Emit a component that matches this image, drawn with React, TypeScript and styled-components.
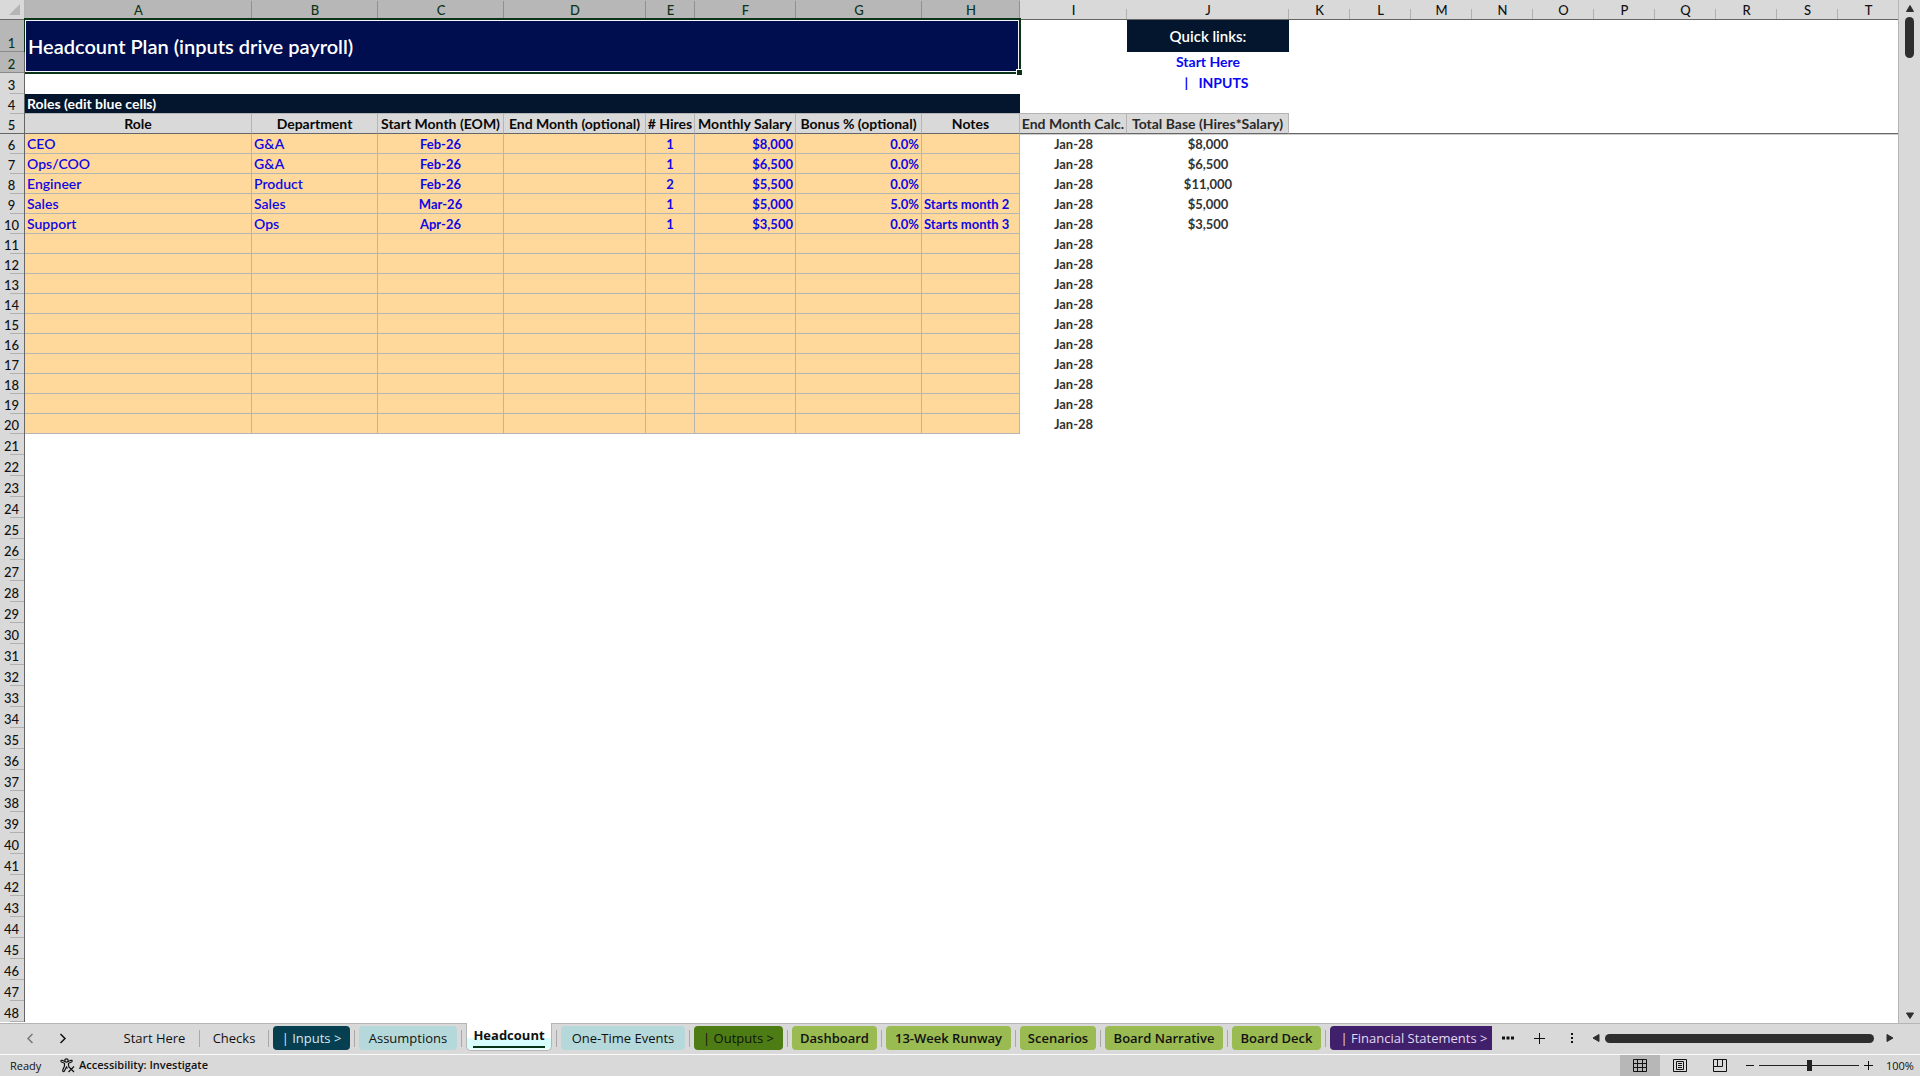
import React from "react";
import styled, { createGlobalStyle, css } from "styled-components";

const sheetFont = `Lato, "Open Sans", sans-serif`;
const uiFont = `"Open Sans", "Noto Sans", sans-serif`;

const chrome = "#d9d9d9";
const chromeActive = "#b7b7b7";
const rule = "#b5b5b5";
const darkRule = "#666666";
const green = "#0a3318";
const navy = "#04162d";
const inputFill = "#ffd99b";
const blue = "#1008e4";

const GlobalStyle = createGlobalStyle`
  *, *::before, *::after { box-sizing: border-box; }
  body { margin: 0; background: ${chrome}; overflow: hidden; }
  button { font: inherit; color: inherit; border: 0; padding: 0; background: none; cursor: pointer; }
`;

const Workbook = styled.div`
  display: flex;
  flex-direction: column;
  height: 100vh;
  background: ${chrome};
  color: #111;
  font-family: ${uiFont};
`;

const SheetArea = styled.main`
  flex: 1;
  min-height: 0;
  display: flex;
`;

const Pane = styled.div`
  flex: 1;
  min-width: 0;
  overflow: hidden;
  background: #fff;
  border-right: 1px solid ${rule};
`;

const Grid = styled.table`
  table-layout: fixed;
  width: 1899px;
  border-collapse: separate;
  border-spacing: 0;
  font-family: ${sheetFont};
  font-size: 13px;
  line-height: 18px;
  white-space: nowrap;
`;

const Col = styled.col<{ $w: number }>`
  width: ${(p) => p.$w}px;
`;

const Row = styled.tr<{ $h: number }>`
  height: ${(p) => p.$h}px;
`;

const Corner = styled.td`
  padding: 0 4px 0 0;
  background: ${chrome};
  border-right: 1px solid ${rule};
  border-bottom: 1px solid ${darkRule};
  line-height: 0;
  text-align: right;
`;

const ColHead = styled.th<{ $on: boolean }>`
  position: relative;
  padding: 2px 0 0;
  font-weight: 500;
  line-height: 17px;
  background: ${(p) => (p.$on ? chromeActive : chrome)};
  color: ${(p) => (p.$on ? green : "#111")};
  border-bottom: 1px solid ${darkRule};
  &::after {
    content: "";
    position: absolute;
    right: 0;
    bottom: 0;
    width: 1px;
    height: ${(p) => (p.$on ? 18 : 10)}px;
    background: ${(p) => (p.$on ? "#8f8f8f" : "#b0b0b0")};
  }
`;

const RowHead = styled.th<{ $on: boolean; $frozenEdge: boolean }>`
  position: relative;
  padding: 0 1px 0 0;
  font-weight: 500;
  vertical-align: bottom;
  background: ${(p) => (p.$on ? chromeActive : chrome)};
  color: ${(p) => (p.$on ? green : "#111")};
  border-right: 1px solid ${darkRule};
  &::after {
    content: "";
    position: absolute;
    right: 0;
    bottom: 0;
    height: 1px;
    width: ${(p) => (p.$on || p.$frozenEdge ? 24 : 14)}px;
    background: ${(p) => (p.$frozenEdge ? darkRule : p.$on ? "#8a8a8a" : "#b0b0b0")};
  }
`;

type Align = "left" | "center" | "right";

const Cell = styled.td<{ $align?: Align }>`
  padding: 0 2px;
  color: #222;
  text-align: ${(p) => p.$align ?? "left"};
  vertical-align: bottom;
`;

const InputCell = styled(Cell)<{ $name: boolean }>`
  background: ${inputFill};
  color: ${blue};
  font-size: ${(p) => (p.$name ? 14 : 13)}px;
  font-weight: ${(p) => (p.$name ? 600 : 700)};
  border-right: 1px solid ${rule};
  border-bottom: 1px solid ${rule};
`;

const CalcCell = styled(Cell)`
  font-weight: 700;
  color: #333;
  padding-bottom: 1px;
`;

const frozen = css`
  border-bottom: 1px solid ${darkRule};
  box-shadow: 0 1px 0 #cfcfcf;
`;

const FrozenCell = styled(Cell)`
  ${frozen}
`;

const FieldHead = styled.th<{ $calc: boolean }>`
  ${frozen}
  padding: 0;
  background: ${chrome};
  color: ${(p) => (p.$calc ? "#2a2a2a" : "#080808")};
  border-right: 1px solid ${rule};
  font-size: 14px;
  font-weight: 700;
  vertical-align: bottom;
`;

const TitleCell = styled.td`
  position: relative;
  padding: 0 3px 1px;
  background: #000d4f;
  color: #fff;
  font-size: 20px;
  font-weight: 600;
  line-height: 24px;
  vertical-align: middle;
`;

const Selection = styled.div`
  position: absolute;
  inset: -2px -1px -1px -1px;
  border: 2px solid ${green};
  border-left-width: 1px;
  box-shadow: inset 0 0 0 1px #f4f4ff;
`;

const FillHandle = styled.div`
  position: absolute;
  right: -3px;
  bottom: -3px;
  width: 7px;
  height: 7px;
  background: ${green};
  border: 1px solid #fff;
`;

const BandCell = styled(Cell)`
  background: ${navy};
  color: #fff;
  font-weight: 700;
  font-size: 14px;
  border-bottom: 1px solid ${rule};
`;

const LinksHead = styled(Cell)`
  background: ${navy};
  color: #fff;
  font-size: 15px;
  font-weight: 600;
  vertical-align: middle;
`;

const LinkCell = styled(Cell)`
  padding-bottom: 2px;
`;

const SheetLink = styled.a`
  color: #0808f0;
  font-weight: 700;
  font-size: 14px;
  text-decoration: none;
  white-space: pre;
`;

const RuledCell = styled(Cell)`
  border-bottom: 1px solid ${rule};
`;

const VScroll = styled.div`
  flex: 0 0 21px;
  display: flex;
  flex-direction: column;
  align-items: center;
  padding: 4px 0 3px;
`;

const VTrack = styled.div`
  flex: 1;
  padding-top: 4px;
`;

const VThumb = styled.div`
  width: 9px;
  height: 41px;
  border-radius: 5px;
  background: #2e2e2e;
`;

const ArrowButton = styled.button`
  display: flex;
  flex: none;
  align-items: center;
  justify-content: center;
  color: #2e2e2e;
`;

const TabStrip = styled.footer`
  flex: 0 0 32px;
  display: flex;
  align-items: flex-start;
  border-bottom: 1px solid #fafafa;
`;

const TabNav = styled.div`
  flex: 0 0 114px;
  height: 31px;
  display: flex;
  align-items: center;
  gap: 19px;
  padding: 0 0 2px 23px;
  border-top: 1px solid ${rule};
`;

const NavButton = styled.button<{ $dim?: boolean }>`
  display: flex;
  width: 14px;
  height: 20px;
  align-items: center;
  justify-content: center;
  color: ${(p) => (p.$dim ? "#777" : "#111")};
`;

const Tabs = styled.nav`
  flex: 1;
  min-width: 0;
  overflow: hidden;
  display: flex;
  align-items: flex-start;
`;

const TabSlot = styled.div`
  flex: none;
  display: flex;
  height: 31px;
`;

const Divider = styled.span`
  width: 9px;
  height: 31px;
  border-top: 1px solid ${rule};
  padding: 6px 4px 0;
  &::before {
    content: "";
    display: block;
    width: 1px;
    height: 17px;
    background: #a9a9a9;
  }
`;

const TabHolder = styled.span<{ $open: boolean }>`
  height: 31px;
  padding-top: ${(p) => (p.$open ? 0 : 2)}px;
  border-top: ${(p) => (p.$open ? "0" : `1px solid ${rule}`)};
`;

const Tab = styled.button<{ $w: number; $bg?: string; $fg?: string; $strong?: boolean }>`
  display: block;
  width: ${(p) => p.$w}px;
  height: 24px;
  border-radius: 4px;
  background: ${(p) => p.$bg ?? "transparent"};
  color: ${(p) => p.$fg ?? "#111"};
  font-size: 13px;
  font-weight: ${(p) => (p.$strong ? 600 : 500)};
  line-height: 24px;
  white-space: nowrap;
`;

const OpenTab = styled(Tab)`
  height: 28px;
  padding-bottom: 2px;
  border-radius: 0 0 5px 5px;
  border: 1px solid ${rule};
  border-top: 0;
  background: linear-gradient(#fff 0 14px, #d8fdfd 16px 24px, #fff 28px);
  font-weight: 700;
  line-height: 22px;
`;

const OpenLabel = styled.span`
  display: inline-block;
  height: 24px;
  border-bottom: 2px solid ${green};
`;

const StripTools = styled.div`
  flex: 0 0 428px;
  height: 31px;
  display: flex;
  align-items: center;
  padding: 0 26px 2px 8px;
  border-top: 1px solid ${rule};
`;

const ToolButton = styled.button<{ $w: number; $end?: boolean }>`
  flex: 0 0 ${(p) => p.$w}px;
  display: flex;
  align-items: center;
  justify-content: ${(p) => (p.$end ? "flex-end" : "center")};
  height: 20px;
`;

const HTrack = styled.div`
  flex: 1;
  padding: 0 12px 0 5px;
`;

const HThumb = styled.div`
  height: 9px;
  border-radius: 5px;
  background: #2e2e2e;
`;

const StatusBar = styled.footer`
  flex: 0 0 21px;
  display: flex;
  align-items: center;
  font-size: 11px;
  font-weight: 500;
  line-height: 20px;
`;

const StatusText = styled.span`
  padding-left: 10px;
  width: 60px;
`;

const AccessButton = styled.button`
  display: flex;
  align-items: center;
  gap: 4px;
  padding-bottom: 1px;
  font-weight: 600;
  font-size: 11px;
`;

const Spacer = styled.div`
  flex: 1;
`;

const ViewButton = styled.button<{ $on?: boolean }>`
  display: flex;
  align-items: center;
  justify-content: center;
  width: 40px;
  height: 21px;
  background: ${(p) => (p.$on ? chromeActive : "transparent")};
`;

const ZoomButton = styled.button`
  display: flex;
  align-items: center;
  justify-content: center;
  width: 19px;
  height: 20px;
`;

const ZoomRange = styled.input`
  appearance: none;
  width: 100px;
  height: 20px;
  margin: 0;
  background: linear-gradient(#222, #222) center / 100% 1px no-repeat;
  &::-webkit-slider-thumb {
    appearance: none;
    width: 5px;
    height: 11px;
    background: #222;
  }
`;

const ZoomValue = styled.span`
  width: 42px;
  padding-left: 8px;
`;

const columns: { id: string; w: number }[] = [
  { id: "A", w: 227 },
  { id: "B", w: 126 },
  { id: "C", w: 126 },
  { id: "D", w: 142 },
  { id: "E", w: 49 },
  { id: "F", w: 101 },
  { id: "G", w: 126 },
  { id: "H", w: 98 },
  { id: "I", w: 107 },
  { id: "J", w: 162 },
  ..."KLMNOPQRST".split("").map((id) => ({ id, w: 61 })),
];

const fields = [
  "Role",
  "Department",
  "Start Month (EOM)",
  "End Month (optional)",
  "# Hires",
  "Monthly Salary",
  "Bonus % (optional)",
  "Notes",
  "End Month Calc.",
  "Total Base (Hires*Salary)",
];

const aligns: Align[] = ["left", "left", "center", "center", "center", "right", "right", "left"];

const roles: string[][] = [
  ["CEO", "G&A", "Feb-26", "", "1", "$8,000", "0.0%", "", "$8,000"],
  ["Ops/COO", "G&A", "Feb-26", "", "1", "$6,500", "0.0%", "", "$6,500"],
  ["Engineer", "Product", "Feb-26", "", "2", "$5,500", "0.0%", "", "$11,000"],
  ["Sales", "Sales", "Mar-26", "", "1", "$5,000", "5.0%", "Starts month 2", "$5,000"],
  ["Support", "Ops", "Apr-26", "", "1", "$3,500", "0.0%", "Starts month 3", "$3,500"],
];

const planRows = Array.from({ length: 15 }, (_, i) => roles[i] ?? Array(9).fill(""));
const emptyRows = Array.from({ length: 28 }, (_, i) => i + 21);

type TabInfo = { label: string; w: number; bg?: string; fg?: string; strong?: boolean; open?: boolean };

const aqua = "#b5d9da";
const olive = "#9aba52";

const tabs: TabInfo[] = [
  { label: "Start Here", w: 81 },
  { label: "Checks", w: 60 },
  { label: "| Inputs >", w: 77, bg: "#063f50", fg: "#d5e8f5" },
  { label: "Assumptions", w: 98, bg: aqua },
  { label: "Headcount", w: 86, open: true },
  { label: "One-Time Events", w: 124, bg: aqua },
  { label: "| Outputs >", w: 89, bg: "#4d7c14" },
  { label: "Dashboard", w: 85, bg: olive, strong: true },
  { label: "13-Week Runway", w: 125, bg: olive, strong: true },
  { label: "Scenarios", w: 76, bg: olive, strong: true },
  { label: "Board Narrative", w: 118, bg: olive, strong: true },
  { label: "Board Deck", w: 89, bg: olive, strong: true },
  { label: "| Financial Statements >", w: 168, bg: "#40206a", fg: "#e2d8f2" },
];

function Triangle({ d, w, h }: { d: string; w: number; h: number }) {
  return (
    <svg width={w} height={h} viewBox={`0 0 ${w} ${h}`} aria-hidden="true">
      <path d={d} fill="#2e2e2e" stroke="#2e2e2e" strokeLinejoin="round" />
    </svg>
  );
}

function Chevron({ d }: { d: string }) {
  return (
    <svg width="8" height="11" viewBox="0 0 8 11" fill="none" stroke="currentColor" strokeWidth="1.5" aria-hidden="true">
      <path d={d} />
    </svg>
  );
}

function Head({ n, on = false, edge = false }: { n: number; on?: boolean; edge?: boolean }) {
  return (
    <RowHead scope="row" $on={on} $frozenEdge={edge}>
      {n}
    </RowHead>
  );
}

function Sheet() {
  return (
    <Grid>
      <colgroup>
        <Col $w={25} />
        {columns.map((c) => (
          <Col key={c.id} $w={c.w} />
        ))}
      </colgroup>
      <thead>
        <Row $h={20}>
          <Corner>
            <svg width="11" height="11" viewBox="0 0 11 11" aria-hidden="true">
              <path d="M11 0V11H0Z" fill="#b5b5b5" />
            </svg>
          </Corner>
          {columns.map((c, i) => (
            <ColHead key={c.id} scope="col" $on={i < 8}>
              {c.id}
            </ColHead>
          ))}
        </Row>
      </thead>
      <tbody>
        <Row $h={32}>
          <Head n={1} on />
          <TitleCell colSpan={8} rowSpan={2}>
            Headcount Plan (inputs drive payroll)
            <Selection />
            <FillHandle />
          </TitleCell>
          <Cell />
          <LinksHead $align="center">Quick links:</LinksHead>
          <Cell colSpan={10} />
        </Row>
        <Row $h={21}>
          <Head n={2} on />
          <Cell />
          <LinkCell $align="center">
            <SheetLink href="#start-here">Start Here</SheetLink>
          </LinkCell>
          <Cell colSpan={10} />
        </Row>
        <Row $h={21}>
          <Head n={3} />
          <Cell colSpan={9} />
          <LinkCell $align="center">
            <SheetLink href="#inputs">{"     |   INPUTS"}</SheetLink>
          </LinkCell>
          <Cell colSpan={10} />
        </Row>
        <Row $h={20}>
          <Head n={4} />
          <BandCell colSpan={8}>Roles (edit blue cells)</BandCell>
          <RuledCell colSpan={2} />
          <Cell colSpan={10} />
        </Row>
        <Row $h={20}>
          <Head n={5} edge />
          {fields.map((f, i) => (
            <FieldHead key={f} scope="col" $calc={i > 7}>
              {f}
            </FieldHead>
          ))}
          <FrozenCell colSpan={10} />
        </Row>
        {planRows.map((row, r) => (
          <Row key={r} $h={20}>
            <Head n={r + 6} />
            {aligns.map((a, i) => (
              <InputCell key={i} $align={a} $name={i < 2}>
                {row[i]}
              </InputCell>
            ))}
            <CalcCell $align="center">Jan-28</CalcCell>
            <CalcCell $align="center">{row[8]}</CalcCell>
            <Cell colSpan={10} />
          </Row>
        ))}
        {emptyRows.map((n) => (
          <Row key={n} $h={21}>
            <Head n={n} />
            <Cell colSpan={20} />
          </Row>
        ))}
      </tbody>
    </Grid>
  );
}

export default function App() {
  return (
    <Workbook>
      <GlobalStyle />
      <SheetArea>
        <Pane>
          <Sheet />
        </Pane>
        <VScroll>
          <ArrowButton aria-label="Scroll up">
            <Triangle w={10} h={9} d="M5 1.5L8.5 7.5H1.5Z" />
          </ArrowButton>
          <VTrack>
            <VThumb />
          </VTrack>
          <ArrowButton aria-label="Scroll down">
            <Triangle w={10} h={8} d="M5 6.5L8.5 1H1.5Z" />
          </ArrowButton>
        </VScroll>
      </SheetArea>

      <TabStrip>
        <TabNav>
          <NavButton $dim aria-label="Previous sheet">
            <Chevron d="M6.5 1L2 5.5L6.5 10" />
          </NavButton>
          <NavButton aria-label="Next sheet">
            <Chevron d="M1.5 1L6 5.5L1.5 10" />
          </NavButton>
        </TabNav>
        <Tabs aria-label="Sheets">
          {tabs.map((t) => (
            <TabSlot key={t.label}>
              <TabHolder $open={!!t.open}>
                {t.open ? (
                  <OpenTab $w={t.w} aria-current="page">
                    <OpenLabel>{t.label}</OpenLabel>
                  </OpenTab>
                ) : (
                  <Tab $w={t.w} $bg={t.bg} $fg={t.fg} $strong={t.strong}>
                    {t.label}
                  </Tab>
                )}
              </TabHolder>
              <Divider />
            </TabSlot>
          ))}
        </Tabs>
        <StripTools>
          <ToolButton $w={15} aria-label="All sheets">
            <svg width="12" height="4" viewBox="0 0 12 4" aria-hidden="true">
              <path d="M0 .5h3v3H0zM4.500 .5h3v3h-3zM9 .5h3v3H9z" fill="#111" />
            </svg>
          </ToolButton>
          <ToolButton $w={49} aria-label="New sheet">
            <svg width="11" height="11" viewBox="0 0 11 11" aria-hidden="true">
              <path d="M5.500 0V11M0 5.500H11" stroke="#111" />
            </svg>
          </ToolButton>
          <ToolButton $w={16} aria-label="Resize tab area">
            <svg width="3" height="11" viewBox="0 0 3 11" aria-hidden="true">
              <path d="M0 0h2v2H0zM0 4h2v2H0zM0 8h2v2H0z" fill="#111" />
            </svg>
          </ToolButton>
          <ToolButton $w={20} $end aria-label="Scroll left">
            <Triangle w={8} h={10} d="M1 5L7 1.500V8.500Z" />
          </ToolButton>
          <HTrack>
            <HThumb />
          </HTrack>
          <ArrowButton aria-label="Scroll right">
            <Triangle w={8} h={10} d="M7 5L1 1.500V8.500Z" />
          </ArrowButton>
        </StripTools>
      </TabStrip>

      <StatusBar>
        <StatusText>Ready</StatusText>
        <AccessButton>
          <svg width="15" height="15" viewBox="0 0 15 15" fill="none" stroke="#111" strokeWidth="1.200" aria-hidden="true">
            <circle cx="6.500" cy="2.500" r="1.700" />
            <path d="M5 3.500L2 2.300C.8 2 .5 3.500 1.500 4L4.500 5.300V8L2.700 12.300C2.400 13.600 3.900 14 4.400 13L6.500 9L7.500 10.500M8 3.500L11 2.300C12.300 2 12.500 3.500 11.500 4L8.500 5.300V7.500L9 8.500" />
            <path d="M8.500 8.500L14 14M14 8.500L8.500 14" />
          </svg>
          Accessibility: Investigate
        </AccessButton>
        <Spacer />
        <ViewButton $on aria-label="Normal view">
          <svg width="14" height="14" viewBox="0 0 14 14" fill="none" stroke="#111" aria-hidden="true">
            <path d="M.5 .5H13.500V12.500H.5ZM.5 4.500H13.500M.5 8.500H13.500M4.500 .5V12.500M9.500 .5V12.500" />
          </svg>
        </ViewButton>
        <ViewButton aria-label="Page layout view">
          <svg width="14" height="14" viewBox="0 0 14 14" fill="none" stroke="#111" aria-hidden="true">
            <path d="M.5 .5H13.500V12.500H.5ZM3.500 2.500H10.500V10.500H3.500ZM5 4.500H9M5 6.500H9M5 8.500H9" />
          </svg>
        </ViewButton>
        <ViewButton aria-label="Page break preview">
          <svg width="14" height="14" viewBox="0 0 14 14" fill="none" stroke="#111" aria-hidden="true">
            <path d="M.5 .5H13.500V12.500H.5ZM4.500 .5V7.500M.5 7.500H9.500V.5" />
          </svg>
        </ViewButton>
        <ZoomButton aria-label="Zoom out">
          <svg width="8" height="9" viewBox="0 0 8 9" aria-hidden="true">
            <path d="M0 4.500H8" stroke="#111" />
          </svg>
        </ZoomButton>
        <ZoomRange type="range" min={0} max={100} defaultValue={50} aria-label="Zoom" />
        <ZoomButton aria-label="Zoom in">
          <svg width="9" height="9" viewBox="0 0 9 9" aria-hidden="true">
            <path d="M4.500 0V9M0 4.500H9" stroke="#111" />
          </svg>
        </ZoomButton>
        <ZoomValue>100%</ZoomValue>
      </StatusBar>
    </Workbook>
  );
}
